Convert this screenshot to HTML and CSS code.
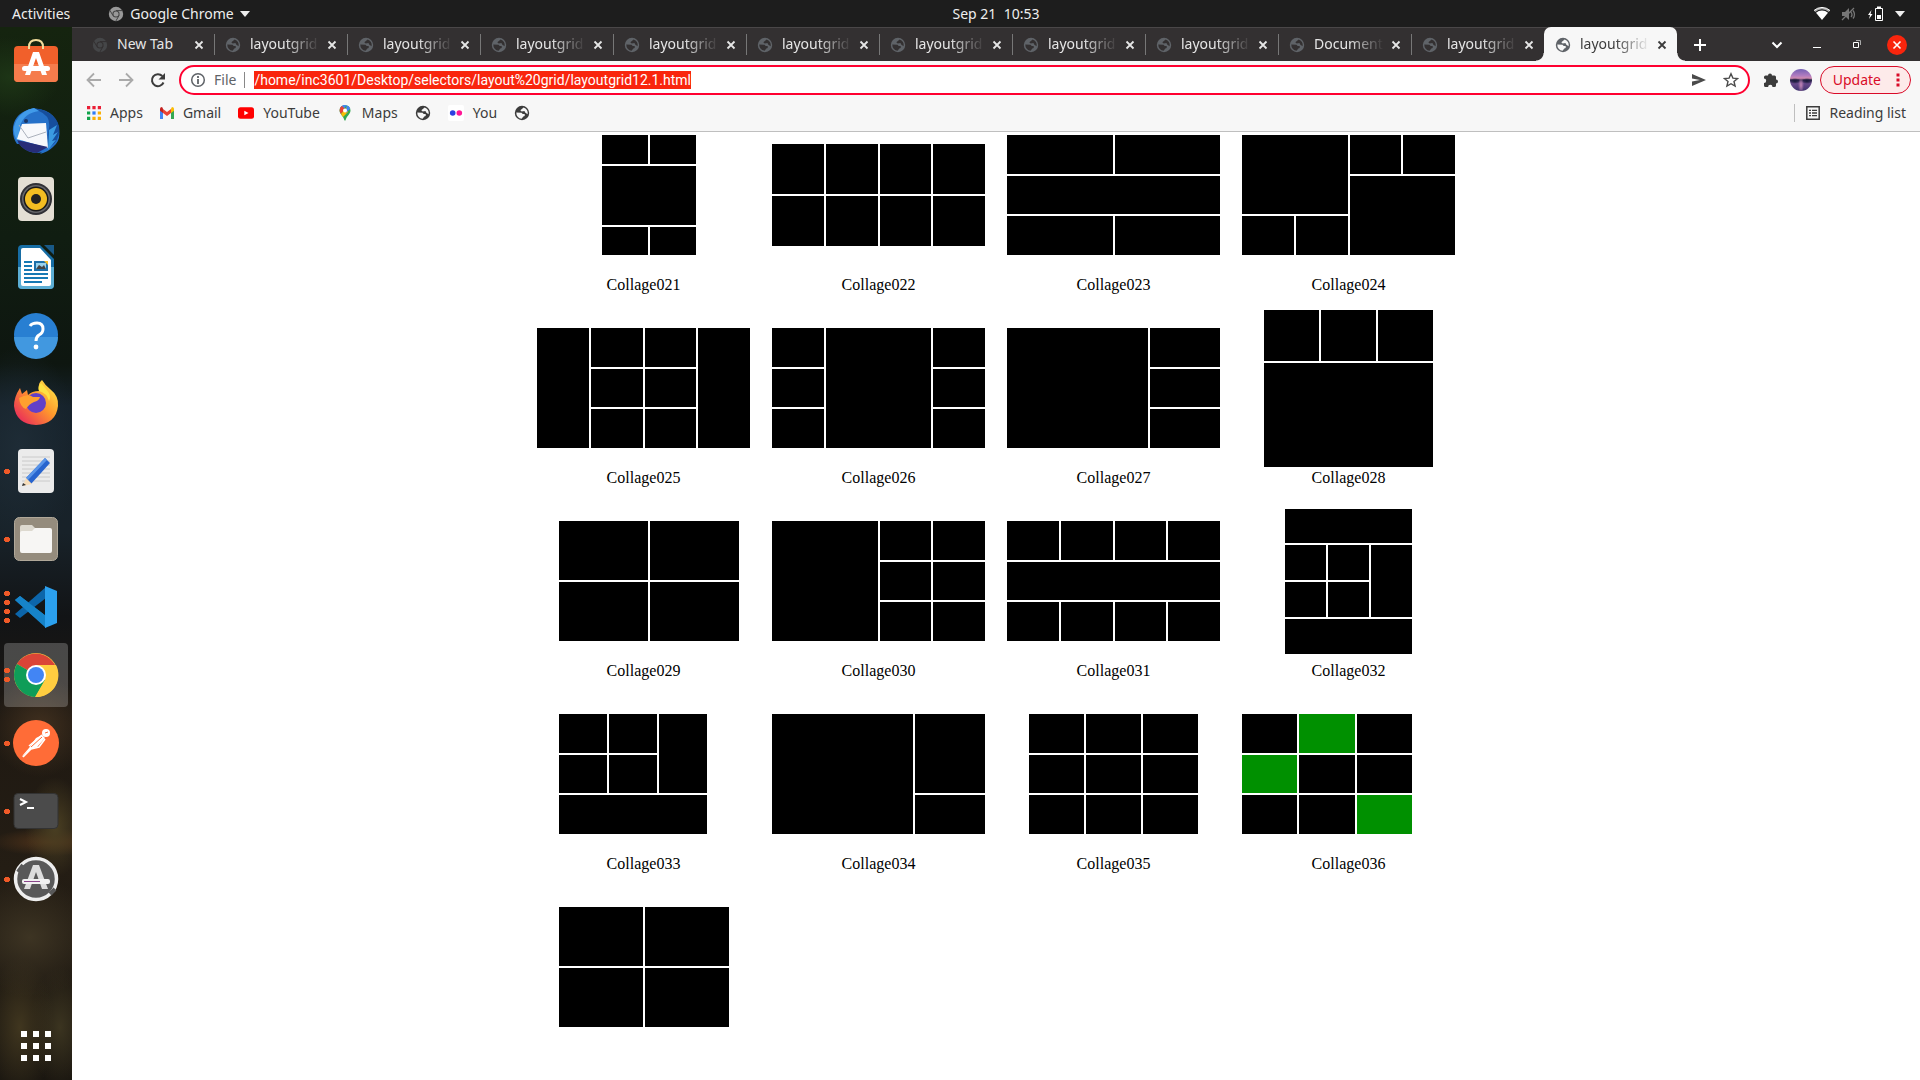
FILE: index.html
```html
<!DOCTYPE html>
<html lang="en">
<head>
<meta charset="utf-8">
<title>layoutgrid12.1</title>
<link rel="stylesheet" href="styles.css">
</head>
<body>
<svg class="sprite" aria-hidden="true">
  <symbol id="globe" viewBox="0 0 16 16"><path fill="currentColor" fill-rule="evenodd" d="M8 .8a7.2 7.2 0 1 0 0 14.4A7.2 7.2 0 0 0 8 .8zM2.3 7.6l5.2.1 1.2 1.4h2v1.8L9.300 11.500 7.600 13.700A5.800 5.800 0 0 1 2.300 7.600zM9.600 2.500a5.800 5.800 0 0 1 4 6.800l-2.200-1.600-1-1.700-2.700.6-1.400-1.300 1.600-1.300z"/></symbol>
  <symbol id="close" viewBox="0 0 10 10"><path d="M1.500 1.500l7 7M8.500 1.500l-7 7" stroke="currentColor" stroke-width="1.800" fill="none"/></symbol>
  <symbol id="chromium" viewBox="0 0 16 16"><circle cx="8" cy="8" r="7.200" fill="currentColor"/><path d="M8 4.600h6.500M5 9.600L1.800 4.200M11 9.600l-3.200 5.500" stroke="var(--cut)" stroke-width="1"/><circle cx="8" cy="8" r="3.600" fill="var(--cut)"/><circle cx="8" cy="8" r="2.500" fill="currentColor"/></symbol>
</svg>

<header class="topbar">
  <nav class="topbar-left">
    <button class="plain">Activities</button>
    <button class="plain app-menu"><svg class="i16 gray-chrome"><use href="#chromium"/></svg>Google Chrome<svg class="caret" viewBox="0 0 10 6"><path d="M0 0h10L5 6z" fill="currentColor"/></svg></button>
  </nav>
  <time class="clock">Sep 21&nbsp; 10:53</time>
  <div class="status">
    <svg class="i16" viewBox="0 0 16 16"><path d="M0 4.500a12 12 0 0 1 16 0l-1.200 1.500a10 10 0 0 0-13.600 0z" fill="#aaa"/><path d="M2 6.800a9 9 0 0 1 12 0L8 14z" fill="#fff"/><path d="M0 4.500a12 12 0 0 1 16 0" fill="none" stroke="#fff"/></svg>
    <svg class="i16" viewBox="0 0 16 16"><path d="M1 6h3l4-4v12l-4-4H1z" fill="#777"/><path d="M1 14L13 2M10 6q2 3 0 5M12 4.500q3 4 0 8" stroke="#777" fill="none" stroke-width="1.300"/></svg>
    <svg class="i16" viewBox="0 0 16 16"><path d="M3.500 4L0 9h2l-1 4 3.500-5h-2z" fill="#fff"/><path d="M7.500 2.500h7v12h-7z" fill="none" stroke="#fff"/><path d="M9 .5h4v2H9zM9 9h4v4H9z" fill="#fff"/></svg>
    <svg class="caret" viewBox="0 0 10 6"><path d="M0 0h10L5 6z" fill="currentColor"/></svg>
  </div>
</header>

<div class="desktop">
  <aside class="dock">
    <button class="dock-item" aria-label="Software"><svg viewBox="0 0 48 48"><path d="M17 10V8q0-7 7-7t7 7v2" fill="none" stroke="#f3dd9c" stroke-width="2"/><rect x="2" y="7" width="44" height="36" rx="4" fill="#f1602b"/><path d="M2 25h44v14q0 4-4 4H6q-4 0-4-4z" fill="#f57c4c"/><path d="M17 10V7M31 10V7" stroke="#f3dd9c" stroke-width="2"/><path d="M21 13h6l8 23h-5l-6-17-6 17h-5z" fill="#fff"/><rect x="10" y="27" width="28" height="5" rx="2.500" fill="#fff"/></svg></button>
    <button class="dock-item" aria-label="Thunderbird"><svg viewBox="0 0 48 48"><circle cx="25" cy="24" r="22" fill="#1f6fce"/><path d="M1 20Q3 5 22 1l5 3q17 2 20 18 2 12-6 18-5 5-13 7 6-6 8-12L5 37Q0 30 1 20z" fill="#2671c9"/><path d="M22 1l5 3q12 5 10 17-3 12 0 20 12-8 10-22Q43 4 22 1z" fill="#164e9d"/><path d="M27 4q-15 2-19 15-2 11 5 20L5 34Q-1 24 4 14 10 3 22 1z" fill="#419be9"/><path d="M10 17l24-1 2 25L5 32z" fill="#f7f8fb"/><path d="M7 18l9 13 18-6" fill="none" stroke="#abb1bc"/><circle cx="14" cy="14" r="2" fill="#183566"/><path d="M5 33q5 12 20 13l11-6z" fill="#272d78"/><path d="M37 23l8-5-4 10 5-3-6 9 4-1-8 10z" fill="#3a9ae1"/></svg></button>
    <button class="dock-item" aria-label="Rhythmbox"><svg viewBox="0 0 48 48"><rect x="6" y="2" width="36" height="44" rx="4" fill="#e4dfd4"/><circle cx="24" cy="24" r="16" fill="#303035"/><circle cx="24" cy="24" r="14" fill="#67676b"/><circle cx="24" cy="24" r="12.500" fill="#191919"/><circle cx="24" cy="24" r="11" fill="#f3bd22"/><circle cx="24" cy="24" r="5" fill="#222"/></svg></button>
    <button class="dock-item" aria-label="Writer"><svg viewBox="0 0 48 48"><path d="M10 2h18l14 14v26q0 4-4 4H10q-4 0-4-4V6q0-4 4-4z" fill="#176da4"/><path d="M6 24h36v18q0 4-4 4H10q-4 0-4-4z" fill="#5caed4"/><path d="M11 5h17l11 12v24q0 2-2 2H11q-2 0-2-2V7q0-2 2-2z" fill="#fff"/><path d="M32 2h10v10z" fill="#195987"/><path d="M12 19h8M12 23h8M12 27h8M12 31h24M12 35h24M12 39h18" stroke="#1679b4" stroke-width="2"/><path d="M22 18h14v10H22z" fill="#1d70a9"/><path d="M24 20h10v6H24z" fill="#98d2ed"/><path d="M24 26l3-4 3 2 2-2 2 4z" fill="#444"/><path d="M32 18h4v4z" fill="#f7bd28"/></svg></button>
    <button class="dock-item" aria-label="Help"><svg viewBox="0 0 48 48"><circle cx="24" cy="24" r="22" fill="#287fd2"/><path d="M2 26a22 22 0 0 0 44 0z" fill="#4198e0"/><path d="M18 15q2-3 7-3 6 0 6 6 0 4-4 6-3 2-3 6" fill="none" stroke="#fff" stroke-width="3"/><circle cx="24" cy="36" r="2.400" fill="#fff"/></svg></button>
    <button class="dock-item" aria-label="Firefox"><svg viewBox="0 0 48 48"><defs><linearGradient id="fire" x1="1" y1="0" x2="0" y2="1"><stop stop-color="#fff44d"/><stop offset=".45" stop-color="#ff982c"/><stop offset="1" stop-color="#e51464"/></linearGradient></defs><path d="M27 9Q26 4 30 1q3 5 8 9 9 7 8 17-2 18-22 19Q4 45 2 27q0-9 6-18l2 6 5-4 1 5q4-4 11-4z" fill="url(#fire)"/><circle cx="24" cy="24" r="10" fill="#6340c8"/><path d="M7 19q9-5 14-1l7 0q-1 4-6 5-5 2-8 7-6-2-7-11z" fill="#ffa02f"/><path d="M27 12q8 2 10 10 2-4 0-8-5-7-8-10-4 4-2 8z" fill="#ffe244"/></svg></button>
    <button class="dock-item" aria-label="Text Editor"><i class="dots d1"></i><svg viewBox="0 0 48 48"><rect x="6" y="2" width="36" height="44" rx="4" fill="#ebebeb"/><path d="M10 10h28M10 14h28M10 18h28M10 22h28M10 26h28M10 30h28M10 34h28" stroke="#cacaca"/><path d="M33 11l5 5-19 21-5-6z" fill="#2864ce"/><path d="M33 11l2 2-19 20-2-2z" fill="#5994e8"/><path d="M14 31l6 6-9 2z" fill="#f6ddba"/><path d="M11 36l3 2-4 1z" fill="#333"/></svg></button>
    <button class="dock-item" aria-label="Files"><i class="dots d1"></i><svg viewBox="0 0 48 48"><rect x="2.500" y="2.500" width="43" height="43" rx="5" fill="#958c7d" stroke="#b0a899"/><path d="M8 18v-6q0-2 2-2h10l4 4v6z" fill="#ddd9cf"/><path d="M10 16h10l3-3h15q2 0 2 2v21q0 2-2 2H10q-2 0-2-2V18q0-2 2-2z" fill="#f7f6f4"/></svg></button>
    <button class="dock-item" aria-label="Visual Studio Code"><i class="dots d4"></i><svg viewBox="0 0 48 48"><path d="M3 17l5-4 26 20v11z" fill="#1687ca"/><path d="M3 31l5 4 26-20V4z" fill="#0c65aa"/><path d="M3 17l5-4 26 20v12z" fill="#1683c9"/><path d="M33 3l12 5v32l-12 5z" fill="#2ba0ee"/></svg></button>
    <button class="dock-item running" aria-label="Google Chrome"><i class="dots d2"></i><svg viewBox="0 0 48 48"><circle cx="24" cy="24" r="22" fill="#ffcd40"/><path d="M24 24L5 13a22 22 0 0 1 38 1z" fill="#db4437"/><path d="M24 24l-19-11a22 22 0 0 0 18 33l10-17z" fill="#0f9d58"/><path d="M24 14h20a22 22 0 0 1-20.500 32L33 29z" fill="#ffcd40"/><circle cx="24" cy="24" r="10" fill="#fff"/><circle cx="24" cy="24" r="8" fill="#4285f4"/></svg></button>
    <button class="dock-item" aria-label="Postman"><i class="dots d1"></i><svg viewBox="0 0 48 48"><circle cx="24" cy="24" r="23" fill="#ff6c37"/><circle cx="34" cy="14" r="4" fill="#fff"/><path d="M24 19l6-3 3 3-8 9-6 2-6 5-3 3 1-2 6-7z" fill="#fff"/><path d="M30 16L17 27M33 20l-6 8-8 2-8 8" stroke="#fff" stroke-width="1.600" fill="none"/><path d="M30 18L19 28" stroke="#ff6c37"/><path d="M33 14l3-1" stroke="#ff6c37"/></svg></button>
    <button class="dock-item" aria-label="Terminal"><i class="dots d1"></i><svg viewBox="0 0 48 48"><rect x="2" y="6.500" width="44" height="35" rx="4" fill="#4b4b4b" stroke="#333"/><path d="M8 12l6 3-6 3M15 21h7" fill="none" stroke="#fff" stroke-width="2"/></svg></button>
    <button class="dock-item" aria-label="Software Updater"><i class="dots d1"></i><svg viewBox="0 0 48 48"><circle cx="24" cy="24" r="20.500" fill="#595959" stroke="#eee" stroke-width="3.500"/><path d="M6 17l5-7M38 39l5-5" stroke="#595959" stroke-width="4"/><path d="M21 10h6l9 24h-6l-6-17-6 17h-6z" fill="#ddd"/><rect x="10" y="24" width="28" height="5" rx="2" fill="#f1f1f1"/><path d="M12 26.500h16" stroke="#8a468b"/></svg></button>
    <button class="dock-item show-apps" aria-label="Show Applications"><svg viewBox="0 0 48 48"><path fill="#fff" d="M9 9h6v6H9zM21 9h6v6h-6zM33 9h6v6h-6zM9 21h6v6H9zM21 21h6v6h-6zM33 21h6v6h-6zM9 33h6v6H9zM21 33h6v6h-6zM33 33h6v6h-6z"/></svg></button>
  </aside>

  <div class="window">
    <div class="tabstrip">
      <div class="tab"><svg class="i16 fav"><use href="#chromium"/></svg><span class="tab-title">New Tab</span><button class="tab-close" aria-label="Close"><svg><use href="#close"/></svg></button></div>
      <div class="tab"><svg class="i16 fav"><use href="#globe"/></svg><span class="tab-title">layoutgrid</span><button class="tab-close" aria-label="Close"><svg><use href="#close"/></svg></button></div>
      <div class="tab"><svg class="i16 fav"><use href="#globe"/></svg><span class="tab-title">layoutgrid</span><button class="tab-close" aria-label="Close"><svg><use href="#close"/></svg></button></div>
      <div class="tab"><svg class="i16 fav"><use href="#globe"/></svg><span class="tab-title">layoutgrid</span><button class="tab-close" aria-label="Close"><svg><use href="#close"/></svg></button></div>
      <div class="tab"><svg class="i16 fav"><use href="#globe"/></svg><span class="tab-title">layoutgrid</span><button class="tab-close" aria-label="Close"><svg><use href="#close"/></svg></button></div>
      <div class="tab"><svg class="i16 fav"><use href="#globe"/></svg><span class="tab-title">layoutgrid</span><button class="tab-close" aria-label="Close"><svg><use href="#close"/></svg></button></div>
      <div class="tab"><svg class="i16 fav"><use href="#globe"/></svg><span class="tab-title">layoutgrid</span><button class="tab-close" aria-label="Close"><svg><use href="#close"/></svg></button></div>
      <div class="tab"><svg class="i16 fav"><use href="#globe"/></svg><span class="tab-title">layoutgrid</span><button class="tab-close" aria-label="Close"><svg><use href="#close"/></svg></button></div>
      <div class="tab"><svg class="i16 fav"><use href="#globe"/></svg><span class="tab-title">layoutgrid</span><button class="tab-close" aria-label="Close"><svg><use href="#close"/></svg></button></div>
      <div class="tab"><svg class="i16 fav"><use href="#globe"/></svg><span class="tab-title">Document</span><button class="tab-close" aria-label="Close"><svg><use href="#close"/></svg></button></div>
      <div class="tab last"><svg class="i16 fav"><use href="#globe"/></svg><span class="tab-title">layoutgrid</span><button class="tab-close" aria-label="Close"><svg><use href="#close"/></svg></button></div>
      <div class="tab active"><svg class="i16 fav"><use href="#globe"/></svg><span class="tab-title">layoutgrid</span><button class="tab-close" aria-label="Close"><svg><use href="#close"/></svg></button></div>
      <button class="plain new-tab" aria-label="New tab"><svg viewBox="0 0 12 12" class="i12"><path d="M6 0v12M0 6h12" stroke="#fff" stroke-width="2"/></svg></button>
      <div class="window-controls">
        <button class="plain" aria-label="Search tabs"><svg class="i20" viewBox="0 0 20 20"><path d="M5.500 7.500L10 12l4.500-4.500" fill="none" stroke="#fff" stroke-width="2"/></svg></button>
        <button class="plain" aria-label="Minimize"><svg class="i20" viewBox="0 0 20 20"><path d="M6 12.500h8" stroke="#fff"/></svg></button>
        <button class="plain" aria-label="Restore"><svg class="i20" viewBox="0 0 20 20"><path d="M6.500 7.500h5v5h-5z" fill="none" stroke="#fff"/><path d="M9 5.500h4.500V10" fill="none" stroke="#aaa"/></svg></button>
        <button class="plain" aria-label="Close window"><svg class="i20" viewBox="0 0 20 20"><circle cx="10" cy="10" r="10" fill="#f9250d"/><path d="M6.500 6.500l7 7M13.500 6.500l-7 7" stroke="#fff" stroke-width="1.600"/></svg></button>
      </div>
    </div>

    <div class="toolbar">
      <button class="plain nav" aria-label="Back"><svg class="i16" viewBox="0 0 16 16"><path d="M15 8H2M8 1.500L1.500 8 8 14.500" fill="none" stroke="#aaa" stroke-width="1.800"/></svg></button>
      <button class="plain nav" aria-label="Forward"><svg class="i16" viewBox="0 0 16 16"><path d="M1 8h13M8 1.500L14.500 8 8 14.500" fill="none" stroke="#aaa" stroke-width="1.800"/></svg></button>
      <button class="plain nav" aria-label="Reload"><svg class="i16" viewBox="0 0 16 16"><path d="M13.500 10.500A6 6 0 1 1 12.300 4" fill="none" stroke="#3c3c3c" stroke-width="2"/><path d="M15 1v6.500H8.500z" fill="#3c3c3c"/></svg></button>
      <div class="omnibox">
        <svg class="i16" viewBox="0 0 16 16"><circle cx="8" cy="8" r="6.300" fill="none" stroke="#5f6368" stroke-width="1.500"/><path d="M8 4v2M8 7v5" stroke="#5f6368" stroke-width="1.800"/></svg>
        <label class="scheme" for="url">File</label>
        <input id="url" class="url" type="text" value="/home/inc3601/Desktop/selectors/layout%20grid/layoutgrid12.1.html">
        <div class="omni-actions">
          <button class="plain" aria-label="Share"><svg class="i16" viewBox="0 0 16 16"><path d="M1 2l14 6-14 6V9.500L9 8 1 6.500z" fill="#4b4b4b"/></svg></button>
          <button class="plain" aria-label="Bookmark"><svg class="i16" viewBox="0 0 16 16"><path d="M8 1.800l1.900 4.300 4.700.4-3.600 3 1.100 4.600L8 11.700l-4.100 2.400L5 9.500l-3.600-3 4.700-.4z" fill="none" stroke="#4b4b4b" stroke-width="1.400"/></svg></button>
        </div>
      </div>
      <button class="plain" aria-label="Extensions"><svg class="i16" viewBox="0 0 16 16"><path d="M2.500 3.500H5a2 2 0 0 1 4 0h2.500q1.500 0 1.500 1.500v2.500a2 2 0 0 1 0 4V13.500q0 1.500-1.500 1.500H9.500a2.200 2.200 0 0 0-4.400 0H2.500Q1 15 1 13.500v-2.600a2.200 2.200 0 0 0 0-4.400V5q0-1.500 1.500-1.500z" fill="#3c3c3c"/></svg></button>
      <button class="avatar" aria-label="Profile"></button>
      <button class="update">Update<svg class="dots-v" viewBox="0 0 4 14"><path d="M.5.500h3v3h-3zM.5 5.500h3v3h-3zM.5 10.500h3v3h-3z" fill="currentColor"/></svg></button>
    </div>

    <nav class="bookmarks">
      <a href="#"><svg class="i14" viewBox="0 0 13 13"><path d="M0 0h3v3H0zM5 0h3v3H5zM10 0h3v3h-3z" fill="#ea1f36"/><path d="M0 5h3v3H0zM0 10h3v3H0z" fill="#10a34a"/><path d="M5 5h3v3H5z" fill="#2f7cf6"/><path d="M10 5h3v3h-3zM5 10h3v3H5zM10 10h3v3h-3z" fill="#fbb105"/></svg><span>Apps</span></a>
      <a href="#"><svg class="i14" viewBox="0 0 14 12"><path d="M0 1.500V12h3V5z" fill="#4285f4"/><path d="M14 1.500V12h-3V5z" fill="#34a853"/><path d="M3 2l4 3 4-3v4L7 9 3 6z" fill="#ea4335"/><path d="M0 2Q0 0 2 0l1 1.500V6L0 3.700z" fill="#c5221f"/><path d="M14 2q0-2-2-2l-1 1.500V6l3-2.300z" fill="#fbbc04"/></svg><span>Gmail</span></a>
      <a href="#"><svg class="i16" viewBox="0 0 16 16"><rect y="2.300" width="16" height="11.400" rx="2.500" fill="#f00"/><path d="M6.300 5.700l4.200 2.300-4.200 2.300z" fill="#fff"/></svg><span>YouTube</span></a>
      <a href="#"><svg class="i16" viewBox="0 0 16 16"><path d="M8 0a5.500 5.500 0 0 1 5.500 5.500C13.500 9 9.500 11 8.500 15.500h-1C6.500 11 2.500 9 2.500 5.500A5.500 5.500 0 0 1 8 0z" fill="#34a853"/><path d="M3 3.500A5.500 5.500 0 0 1 9.500.2L4.500 7z" fill="#4285f4"/><path d="M3.200 2.700A5.500 5.500 0 0 1 5 .900L8 4 4 9Q1.800 6 3.200 2.700z" fill="#ea4335"/><path d="M4 9l6-7 1 5-5 5z" fill="#fbbc04"/><path d="M9.500.2q3 1 3.700 3.300L9 8z" fill="#4285f4"/><circle cx="8" cy="5.500" r="2" fill="#fff"/></svg><span>Maps</span></a>
      <a href="#" aria-label="Saved page"><svg class="i16"><use href="#globe"/></svg></a>
      <a href="#"><svg class="i16" viewBox="0 0 16 16"><rect width="16" height="16" rx="2" fill="#fff"/><circle cx="4.700" cy="8" r="2.800" fill="#2d3fe0"/><circle cx="11.300" cy="8" r="2.800" fill="#ff1695"/></svg><span>You</span></a>
      <a href="#" aria-label="Saved page"><svg class="i16"><use href="#globe"/></svg></a>
      <button class="plain reading"><svg class="i14" viewBox="0 0 14 14"><path d="M.8.800h12.400v12.400H.8z" fill="none" stroke="currentColor" stroke-width="1.500"/><path d="M3 4.300h2M6 4.300h5M3 7h2M6 7h5M3 9.700h2M6 9.700h5" stroke="currentColor" stroke-width="1.300"/></svg>Reading list</button>
    </nav>

    <main class="page">
      <figure><div class="frame"><div class="collage c2 r4 w94"><b></b><b></b><b class="x2 y2"></b><b></b><b></b></div></div><figcaption>Collage021</figcaption></figure>
      <figure><div class="frame"><div class="collage c4 r2 h102"><b></b><b></b><b></b><b></b><b></b><b></b><b></b><b></b></div></div><figcaption>Collage022</figcaption></figure>
      <figure><div class="frame"><div class="collage c2 r3"><b></b><b></b><b class="x2"></b><b></b><b></b></div></div><figcaption>Collage023</figcaption></figure>
      <figure><div class="frame"><div class="collage c4 r3"><b class="x2 y2"></b><b></b><b></b><b class="x2 y2"></b><b></b><b></b></div></div><figcaption>Collage024</figcaption></figure>

      <figure><div class="frame"><div class="collage c4 r3"><b class="y3"></b><b></b><b></b><b class="y3"></b><b></b><b></b><b></b><b></b></div></div><figcaption>Collage025</figcaption></figure>
      <figure><div class="frame"><div class="collage c4 r3"><b></b><b class="x2 y3"></b><b></b><b></b><b></b><b></b><b></b></div></div><figcaption>Collage026</figcaption></figure>
      <figure><div class="frame"><div class="collage c3 r3"><b class="x2 y3"></b><b></b><b></b><b></b></div></div><figcaption>Collage027</figcaption></figure>
      <figure><div class="frame"><div class="collage c3 r3 w169 h157 inset"><b></b><b></b><b></b><b class="x3 y2"></b></div></div><figcaption>Collage028</figcaption></figure>

      <figure><div class="frame"><div class="collage c2 r2 w180 inset"><b></b><b></b><b></b><b></b></div></div><figcaption>Collage029</figcaption></figure>
      <figure><div class="frame"><div class="collage c4 r3"><b class="x2 y3"></b><b></b><b></b><b></b><b></b><b></b><b></b></div></div><figcaption>Collage030</figcaption></figure>
      <figure><div class="frame"><div class="collage c4 r3"><b></b><b></b><b></b><b></b><b class="x4"></b><b></b><b></b><b></b><b></b></div></div><figcaption>Collage031</figcaption></figure>
      <figure><div class="frame"><div class="collage c3 r4 w127 h145"><b class="x3"></b><b></b><b></b><b class="y2"></b><b></b><b></b><b class="x3"></b></div></div><figcaption>Collage032</figcaption></figure>

      <figure><div class="frame"><div class="collage c3 r3 w148 inset"><b></b><b></b><b class="y2"></b><b></b><b></b><b class="x3"></b></div></div><figcaption>Collage033</figcaption></figure>
      <figure><div class="frame"><div class="collage c3 r3"><b class="x2 y3"></b><b class="y2"></b><b></b></div></div><figcaption>Collage034</figcaption></figure>
      <figure><div class="frame"><div class="collage c3 r3 w169 inset"><b></b><b></b><b></b><b></b><b></b><b></b><b></b><b></b><b></b></div></div><figcaption>Collage035</figcaption></figure>
      <figure><div class="frame"><div class="collage c3 r3 w170"><b></b><b class="green"></b><b></b><b class="green"></b><b></b><b></b><b></b><b></b><b class="green"></b></div></div><figcaption>Collage036</figcaption></figure>

      <figure><div class="frame"><div class="collage c2 r2 w170 inset"><b></b><b></b><b></b><b></b></div></div></figure>
    </main>
  </div>
</div>
</body>
</html>
```
FILE: styles.css
```css
* { box-sizing: border-box; }
body {
  margin: 0;
  min-height: 100vh;
  display: flex;
  flex-direction: column;
  background: #fff;
  color: #000;
  font: 14px/18px "Noto Sans", sans-serif;
}
.sprite { display: none; }
svg { display: block; flex: none; }
button, input { font: inherit; color: inherit; }
.plain, .dock-item, .tab-close { border: 0; padding: 0; background: none; }
.i12 { width: 12px; height: 12px; }
.i14 { width: 14px; height: 14px; }
.i16 { width: 16px; height: 16px; }
.i20 { width: 20px; height: 20px; }
.caret { width: 10px; height: 6px; }

/* system bar */
.topbar {
  height: 27px;
  display: grid;
  grid-template-columns: minmax(0, 1fr) auto minmax(0, 1fr);
  align-items: center;
  padding-left: 72px;
  background: #1d1d1d;
  color: #eee;
}
.topbar-left { display: flex; gap: 38px; margin-left: -60px; }
.app-menu { display: flex; align-items: center; gap: 6px; }
.gray-chrome { color: #999; --cut: #444; }
.status { display: flex; justify-content: flex-end; align-items: center; gap: 11px; padding-right: 15px; }

.desktop { flex: 1; display: flex; }

/* dock */
.dock {
  width: 72px;
  flex: none;
  display: flex;
  flex-direction: column;
  align-items: center;
  gap: 4px;
  padding: 4px 0 2px;
  background:
    radial-gradient(ellipse 30px 50px at 55px 800px, #4a3f22, transparent),
    radial-gradient(ellipse 70px 60px at 30px 910px, #3d3423, transparent),
    radial-gradient(ellipse 60px 14px at 50px 815px, #50331a, transparent),
    radial-gradient(ellipse 34px 70px at 20px 1000px, #40361f, transparent),
    radial-gradient(ellipse 30px 60px at 60px 1000px, #3b3420, transparent),
    radial-gradient(ellipse 50px 50px at 40px 700px, #41301f, transparent),
    radial-gradient(ellipse 60px 100px at 20px 420px, #1e2c36, transparent),
    radial-gradient(ellipse 50px 40px at 10px 50px, #1d3516, transparent),
    linear-gradient(#15240f, #101d11 20%, #0e1610 32%, #16222b 36%, #182229 48%, #121416 56%, #1f1912 66%, #241d14 80%, #1a1610);
}
.dock-item {
  position: relative;
  width: 64px;
  height: 64px;
  flex: none;
  display: grid;
  place-items: center;
  border-radius: 4px;
}
.dock-item svg { width: 48px; height: 48px; }
.running { background: #ffffff38; }
.show-apps { margin-top: auto; }
.dots {
  position: absolute;
  left: 0;
  width: 6px;
  background: radial-gradient(circle 3px, #f05a28 90%, transparent) 0 0 / 6px 9px;
}
.d1 { height: 9px; }
.d2 { height: 18px; }
.d4 { height: 36px; }

/* browser window */
.window { flex: 1; min-width: 0; display: flex; flex-direction: column; }
.tabstrip {
  display: flex;
  height: 34px;
  padding-left: 9px;
  background: #333031;
  border-top: 1px solid #4a4748;
  color: #e6e6e6;
}
.tab {
  position: relative;
  flex: 0 1 133px;
  min-width: 0;
  display: flex;
  align-items: center;
  padding: 0 9px 0 11px;
  --cut: #333031;
}
.tab::after {
  content: "";
  position: absolute;
  right: -1px;
  top: 6px;
  width: 1px;
  height: 21px;
  background: #777;
}
.fav { color: #5f6368; }
.tab-title {
  flex: 1;
  min-width: 0;
  margin: 0 6px 0 9px;
  padding-bottom: 2px;
  overflow: hidden;
  white-space: nowrap;
  mask-image: linear-gradient(to right, #000 50%, transparent);
}
.tab:first-child .fav { color: #454648; }
.tab:first-child .tab-title { mask-image: none; }
.tab-close { display: grid; place-items: center; width: 12px; height: 16px; }
.tab-close svg { width: 10px; height: 10px; }
.tab.last::after { display: none; }
.tab.active {
  margin-top: -1px;
  padding-top: 1px;
  background: #f7f7f7;
  color: #3c3c3c;
  border-radius: 7px 7px 0 0;
}
.tab.active::before, .tab.active::after {
  content: "";
  position: absolute;
  top: auto;
  bottom: 0;
  width: 8px;
  height: 8px;
}
.tab.active::before { left: -8px; background: radial-gradient(circle at 0 0, transparent 7px, #f7f7f7 8px); }
.tab.active::after { right: -8px; background: radial-gradient(circle at 100% 0, transparent 7px, #f7f7f7 8px); }
.new-tab { margin-left: 17px; }
.window-controls { margin-left: auto; display: flex; align-items: center; gap: 20px; padding-right: 13px; }

.toolbar {
  display: flex;
  align-items: center;
  gap: 16px;
  padding: 4px 9px 0 14px;
  background: #f7f7f7;
}
.omnibox {
  flex: 1;
  min-width: 0;
  height: 30px;
  margin: 0 -3px;
  display: flex;
  align-items: center;
  padding: 0 9px;
  border: 2px solid #ff0030;
  border-radius: 15px;
  background: #fff;
}
.scheme {
  margin-left: 8px;
  padding-right: 8px;
  border-right: 1px solid #888;
  line-height: 16px;
  color: #5f6368;
}
.url {
  field-sizing: content;
  min-width: 0;
  height: 18px;
  margin-left: 9px;
  padding: 0;
  border: 0;
  outline: 0;
  background: #f9250d;
  color: #fff;
  font-family: Roboto, sans-serif;
}
.omni-actions { margin-left: auto; display: flex; gap: 16px; }
.avatar {
  width: 22px;
  height: 22px;
  margin: 0 -8px 0 -5px;
  padding: 0;
  border: 0;
  border-radius: 50%;
  background:
    radial-gradient(ellipse 5px 3px at 5px 12px, #191a3a, transparent),
    radial-gradient(ellipse 5px 3px at 17px 12px, #191a3a, transparent),
    radial-gradient(ellipse 3px 8px at 11px 16px, #c587b8, transparent),
    linear-gradient(#7460b4, #b07cc0 30%, #d08ab0 42%, #232046 50%, #6a4a8c 65%, #40336e);
}
.update {
  height: 28px;
  display: flex;
  align-items: center;
  gap: 15px;
  padding: 0 10px 0 12px;
  border: 1px solid #d90a28;
  border-radius: 14px;
  background: #fdeaea;
  color: #d90a28;
}
.dots-v { width: 4px; height: 14px; }

.bookmarks {
  height: 37px;
  display: flex;
  align-items: center;
  gap: 17px;
  padding: 0 14px 0 15px;
  border-bottom: 1px solid #bfbfbf;
  background: #f7f7f7;
  color: #3c3c3c;
}
.bookmarks a { display: flex; align-items: center; gap: 9px; color: inherit; text-decoration: none; }
.reading {
  margin-left: auto;
  display: flex;
  align-items: center;
  gap: 9px;
  padding-left: 11px;
  border-left: 1px solid #bfbfbf;
}

/* collage gallery */
.page {
  flex: 1;
  display: grid;
  grid-template-columns: repeat(4, 213px);
  justify-content: center;
  align-content: start;
  gap: 34px 22px;
  padding-top: 3px;
  background: #fff;
  font: 16px/18px "Liberation Serif", serif;
}
figure { margin: 0; display: flex; flex-direction: column; gap: 21px; }
figcaption { text-align: center; }
.frame { height: 120px; display: flex; align-items: center; justify-content: center; }
.collage {
  --w: 213px;
  --h: 120px;
  flex: none;
  width: var(--w);
  height: var(--h);
  display: grid;
  gap: 2px;
}
.collage b { background: #000; }
.collage .green { background: #009000; }
.c2 { grid-template-columns: repeat(2, 1fr); }
.c3 { grid-template-columns: repeat(3, 1fr); }
.c4 { grid-template-columns: repeat(4, 1fr); }
.r2 { grid-template-rows: repeat(2, 1fr); }
.r3 { grid-template-rows: repeat(3, 1fr); }
.r4 { grid-template-rows: repeat(4, 1fr); }
.x2 { grid-column: span 2; }
.x3 { grid-column: span 3; }
.x4 { grid-column: span 4; }
.y2 { grid-row: span 2; }
.y3 { grid-row: span 3; }
.w94 { --w: 94px; margin-left: 11px; }
.w127 { --w: 127px; }
.w148 { --w: 148px; }
.w169 { --w: 169px; }
.w170 { --w: 170px; margin-right: auto; }
.w180 { --w: 180px; }
.h102 { --h: 102px; }
.h145 { --h: 145px; }
.h157 { --h: 157px; }
.inset { margin-left: 22px; margin-right: auto; }
```
